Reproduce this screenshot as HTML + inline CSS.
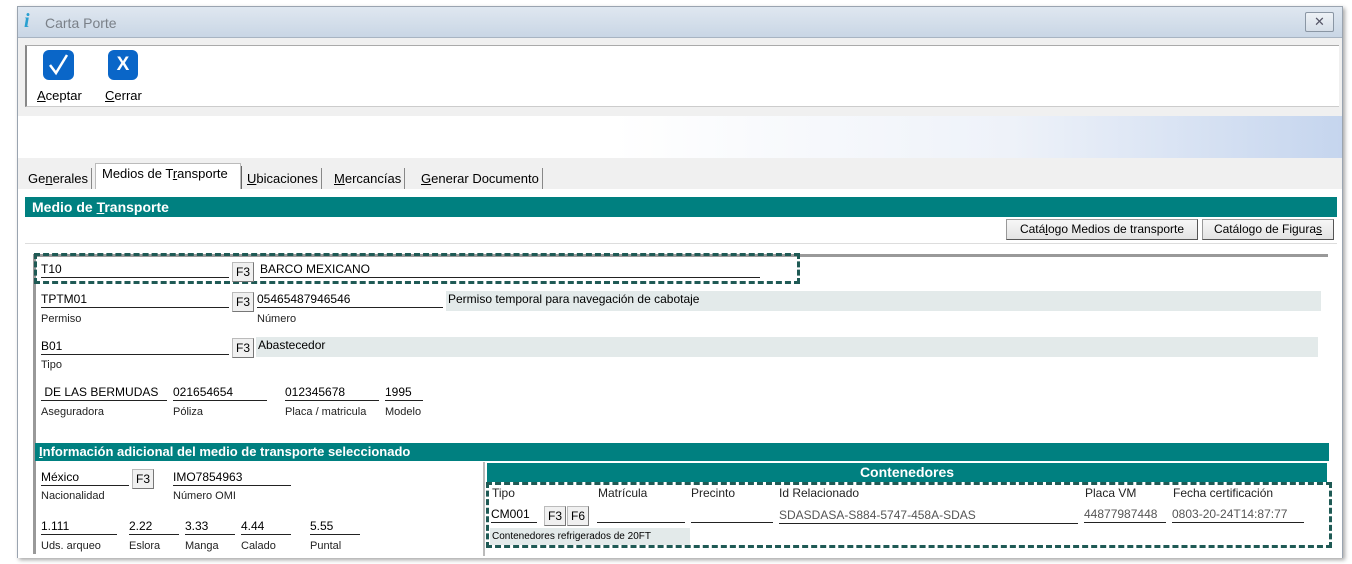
<!DOCTYPE html>
<html><head><meta charset="utf-8"><style>
*{box-sizing:border-box;margin:0;padding:0}
body{width:1352px;height:564px;background:#fff;font-family:"Liberation Sans",Arial,sans-serif;font-size:12px;color:#000;position:relative;overflow:hidden}
.a{position:absolute}
.win{left:17px;top:6px;width:1326px;height:552px;background:#f0f0f0;border:1px solid #9aa4b0;box-shadow:2px 2px 4px rgba(0,0,0,.35)}
.title{left:18px;top:7px;width:1324px;height:31px;background:linear-gradient(#dfe7f0,#c9d6e5);border-bottom:1px solid #a8b4c2}
.fld{position:absolute;border-bottom:1px solid #222;height:16px;font-size:12px;line-height:15px;white-space:nowrap}
.lbl{position:absolute;font-size:11px;color:#222}
.f3{position:absolute;width:22px;height:20px;background:#f0f0f0;border:1px solid #bbb;border-right-color:#777;border-bottom-color:#777;font-size:12px;text-align:center;line-height:19px}
.desc{position:absolute;background:#e3eaea;height:20px;line-height:17px;padding-left:2px;font-size:12px}
.teal{position:absolute;background:#008080;color:#fff;font-weight:bold;font-size:14px}
.btn{position:absolute;height:21px;background:linear-gradient(#f7f7f7,#e3e3e3);border:1px solid #999;border-right-color:#555;border-bottom-color:#555;font-size:12px;line-height:19px;text-align:center}
.tab{position:absolute;top:166px;height:22px;font-size:13px;line-height:21px;padding:0 3px;border-right:1px solid #888}
.dash{position:absolute;border:3px dashed #1f5a55}
.g{color:#555}
</style></head><body>
<div class="a win"></div>
<div class="a title"></div>
<div class="a" style="left:24px;top:10px;font:italic bold 20px 'Liberation Serif',serif;color:#2aa0d0">i</div>
<div class="a" style="left:45px;top:15px;font-size:14px;color:#7a8088">Carta Porte</div>
<div class="a" style="left:1305px;top:12px;width:29px;height:20px;border:1px solid #8a96a4;border-radius:2px;background:linear-gradient(#eef2f6,#d6dee8);text-align:center;font-size:13px;line-height:18px;color:#556">&#x2715;</div>
<!-- toolbar -->
<div class="a" style="left:25px;top:45px;width:1314px;height:62px;background:#fff;border-left:2px solid #888;border-top:1px solid #aaa;border-bottom:1px solid #ccc"></div>
<div class="a" style="left:43px;top:50px;width:31px;height:30px;background:#0a66c8;border-radius:6px"><svg width="31" height="30"><path d="M7 15 L13 23 L24 5" stroke="#fff" stroke-width="2.5" fill="none"/></svg></div>
<div class="a" style="left:108px;top:50px;width:30px;height:30px;background:#0a66c8;border-radius:6px;color:#fff;font-weight:bold;font-size:19px;text-align:center;line-height:30px">X</div>
<div class="a" style="left:37px;top:88px;font-size:13px"><u>A</u>ceptar</div>
<div class="a" style="left:105px;top:88px;font-size:13px"><u>C</u>errar</div>
<!-- band -->
<div class="a" style="left:18px;top:116px;width:1324px;height:42px;background:linear-gradient(90deg,#fff 0%,#fff 45%,#eef2f9 75%,#c5d5ee 100%)"></div>
<!-- tabs -->
<div class="tab" style="left:25px;top:168px">Ge<u>n</u>erales</div>
<div class="a" style="left:95px;top:163px;width:146px;height:26px;background:#fff;border:1px solid #bbb;border-bottom:none"></div>
<div class="a" style="left:102px;top:166px;font-size:13px">Medios de T<u>r</u>ansporte</div>
<div class="a" style="left:241px;top:166px;height:23px;border-left:1px solid #666"></div>
<div class="tab" style="left:244px;top:168px"><u>U</u>bicaciones</div>
<div class="tab" style="left:331px;top:168px"><u>M</u>ercancías</div>
<div class="tab" style="left:418px;top:168px"><u>G</u>enerar Documento</div>
<!-- content -->
<div class="a" style="left:18px;top:189px;width:1324px;height:369px;background:#fff"></div>
<div class="teal" style="left:25px;top:197px;width:1312px;height:20px;line-height:20px;padding-left:7px">Medio de <u>T</u>ransporte</div>
<div class="btn" style="left:1006px;top:219px;width:192px">Catá<u>l</u>ogo Medios de transporte</div>
<div class="btn" style="left:1202px;top:219px;width:132px">Catálogo de Figura<u>s</u></div>
<div class="a" style="left:25px;top:243px;width:1312px;height:1px;background:#ddd"></div>
<div class="a" style="left:34px;top:254px;width:1294px;height:3px;background:#999"></div>
<div class="a" style="left:33px;top:254px;width:3px;height:300px;background:#999"></div>
<div class="dash" style="left:34px;top:253px;width:766px;height:31px"></div>
<div class="fld" style="left:41px;top:262px;width:188px">T10</div>
<div class="f3" style="left:232px;top:262px">F3</div>
<div class="fld" style="left:260px;top:262px;width:500px">BARCO MEXICANO</div>
<div class="fld" style="left:41px;top:292px;width:188px">TPTM01</div>
<div class="f3" style="left:232px;top:292px">F3</div>
<div class="fld" style="left:257px;top:292px;width:186px">05465487946546</div>
<div class="desc" style="left:446px;top:291px;width:875px">Permiso temporal para navegación de cabotaje</div>
<div class="lbl" style="left:41px;top:313px">Permiso</div>
<div class="lbl" style="left:257px;top:313px">Número</div>
<div class="fld" style="left:41px;top:339px;width:188px">B01</div>
<div class="f3" style="left:232px;top:338px">F3</div>
<div class="desc" style="left:256px;top:337px;width:1062px">Abastecedor</div>
<div class="lbl" style="left:41px;top:359px">Tipo</div>
<div class="fld" style="left:41px;top:385px;width:126px">&nbsp;DE LAS BERMUDAS</div>
<div class="fld" style="left:173px;top:385px;width:94px">021654654</div>
<div class="fld" style="left:285px;top:385px;width:94px">012345678</div>
<div class="fld" style="left:385px;top:385px;width:38px">1995</div>
<div class="lbl" style="left:41px;top:406px">Aseguradora</div>
<div class="lbl" style="left:173px;top:406px">Póliza</div>
<div class="lbl" style="left:285px;top:406px">Placa / matricula</div>
<div class="lbl" style="left:385px;top:406px">Modelo</div>
<div class="teal" style="left:35px;top:443px;width:1294px;height:18px;line-height:18px;padding-left:4px;font-size:13px"><u>I</u>nformación adicional del medio de transporte seleccionado</div>
<div class="a" style="left:483px;top:462px;width:2px;height:94px;background:#bbb"></div>
<div class="fld" style="left:41px;top:470px;width:88px">México</div>
<div class="f3" style="left:132px;top:469px">F3</div>
<div class="fld" style="left:173px;top:470px;width:118px">IMO7854963</div>
<div class="lbl" style="left:41px;top:490px">Nacionalidad</div>
<div class="lbl" style="left:173px;top:490px">Número OMI</div>
<div class="fld" style="left:41px;top:519px;width:76px">1.111</div>
<div class="fld" style="left:129px;top:519px;width:50px">2.22</div>
<div class="fld" style="left:185px;top:519px;width:50px">3.33</div>
<div class="fld" style="left:241px;top:519px;width:50px">4.44</div>
<div class="fld" style="left:310px;top:519px;width:50px">5.55</div>
<div class="lbl" style="left:41px;top:540px">Uds. arqueo</div>
<div class="lbl" style="left:129px;top:540px">Eslora</div>
<div class="lbl" style="left:185px;top:540px">Manga</div>
<div class="lbl" style="left:241px;top:540px">Calado</div>
<div class="lbl" style="left:310px;top:540px">Puntal</div>
<div class="teal" style="left:487px;top:463px;width:840px;height:19px;line-height:19px;text-align:center">Contenedores</div>
<div class="dash" style="left:486px;top:482px;width:846px;height:66px"></div>
<div class="lbl" style="left:492px;top:486px;font-size:12px">Tipo</div>
<div class="lbl" style="left:598px;top:486px;font-size:12px">Matrícula</div>
<div class="lbl" style="left:691px;top:486px;font-size:12px">Precinto</div>
<div class="lbl" style="left:779px;top:486px;font-size:12px">Id Relacionado</div>
<div class="lbl" style="left:1085px;top:486px;font-size:12px">Placa VM</div>
<div class="lbl" style="left:1173px;top:486px;font-size:12px">Fecha certificación</div>
<div class="fld" style="left:491px;top:507px;width:46px">CM001</div>
<div class="f3" style="left:544px;top:506px">F3</div>
<div class="f3" style="left:567px;top:506px">F6</div>
<div class="fld" style="left:597px;top:507px;width:88px"></div>
<div class="fld" style="left:691px;top:507px;width:82px"></div>
<div class="fld g" style="left:779px;top:508px;width:299px">SDASDASA-S884-5747-458A-SDAS</div>
<div class="fld g" style="left:1084px;top:507px;width:82px">44877987448</div>
<div class="fld g" style="left:1172px;top:507px;width:132px">0803-20-24T14:87:77</div>
<div class="desc" style="left:490px;top:528px;width:200px;height:17px;line-height:17px;font-size:10px">Contenedores refrigerados de 20FT</div>
</body></html>
